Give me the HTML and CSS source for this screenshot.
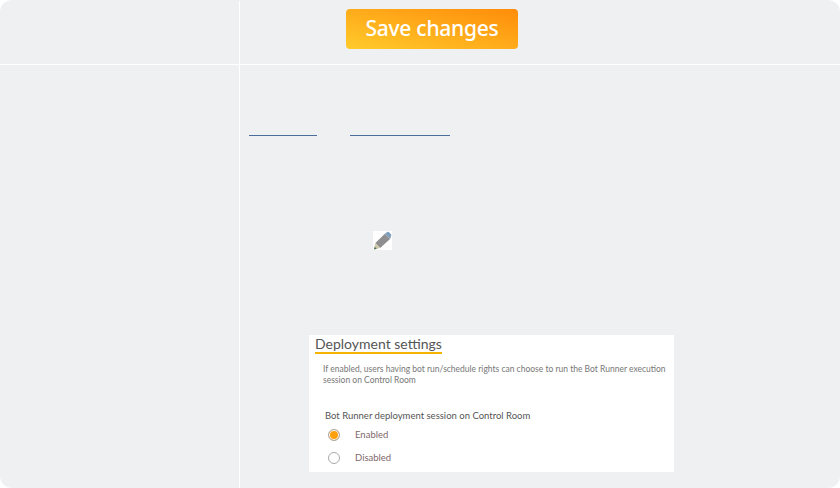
FILE: index.html
```html
<!DOCTYPE html>
<html lang="en">
<head>
    <meta charset="UTF-8">
    <title>Deployment settings</title>
    <link rel="stylesheet" href="styles.css">
</head>
<body>
    <div class="table">
        <div class="cell side top"></div>
        <div class="cell main top">
            <button class="save-btn" type="button">Save changes</button>
        </div>
        <div class="cell side"></div>
        <div class="cell main">
            <div class="links">
                <a class="link link-short" href="#"></a>
                <a class="link link-long" href="#"></a>
            </div>
            <svg class="pencil" width="19" height="19" viewBox="0 0 20 20">
                <rect width="20" height="20" fill="#fff"/>
                <path d="M2.5 12.5 L12.5 3 L18 8.5 L7.5 18 Z" fill="#8f8f92"/>
                <path d="M12.5 3 L15 1 Q16.2 0.6 17.2 1.5 L19 3.4 Q19.6 4.6 19 5.6 L18 8.5 Z" fill="#7f9fbd"/>
                <path d="M2.5 12.5 L7.5 18 L1 19.5 Z" fill="#cfc8a8"/>
                <path d="M1 19.5 L1.8 16.5 L4 18.6 Z" fill="#4a6a5a"/>
            </svg>
            <div class="shot">
                <h4 class="shot-title">Deployment settings</h4>
                <p class="shot-desc">If enabled, users having bot run/schedule rights can choose to run the Bot Runner execution session on Control Room</p>
                <div class="shot-label">Bot Runner deployment session on Control Room</div>
                <div class="radio-row">
                    <span class="radio checked"></span>
                    <span class="radio-text">Enabled</span>
                </div>
                <div class="radio-row">
                    <span class="radio"></span>
                    <span class="radio-text">Disabled</span>
                </div>
            </div>
        </div>
    </div>
</body>
</html>
```

FILE: styles.css
```css
body {
    margin: 0;
    padding: 0;
    background: #fff;
    font-family: 'Lato', sans-serif;
}

.table {
    display: grid;
    grid-template-columns: 240px 600px;
    grid-template-rows: 64px 423px;
    width: 840px;
    height: 488px;
    box-sizing: border-box;
    padding-top: 1px;
    background: #eef0f2;
    border-radius: 12px;
    overflow: hidden;
}

.cell {
    box-sizing: border-box;
}

.side {
    border-right: 1px solid #fff;
}

.top {
    border-bottom: 1px solid #fff;
}

.main.top {
    padding: 8px 0 0 106px;
}

.save-btn {
    display: block;
    width: 172px;
    height: 40px;
    padding: 0 0 2px;
    border: none;
    border-radius: 4px;
    background: linear-gradient(to top right, #ffcb2b, #ff8c0a);
    color: #fff;
    font-family: 'Noto Sans', sans-serif;
    font-size: 21px;
    font-weight: 500;
    letter-spacing: -0.25px;
    cursor: pointer;
}

.links {
    display: flex;
    gap: 33px;
    margin: 70px 0 0 9px;
}

.link {
    display: block;
    height: 1px;
    background: #4a6d9c;
}

.link-short {
    width: 68px;
}

.link-long {
    width: 100px;
}

.pencil {
    display: block;
    margin: 95px 0 0 133px;
    filter: blur(0.4px);
}

.shot {
    box-sizing: border-box;
    width: 365px;
    height: 137px;
    margin: 85px 0 0 69px;
    padding: 0 0 0 6px;
    background: #fff;
    color: #555;
}

.shot-title {
    width: fit-content;
    margin: 0;
    border-bottom: 2px solid #f5b400;
    font-size: 14px;
    font-weight: 400;
    line-height: 17px;
}

.shot-desc {
    margin: 10px 0 0 8px;
    width: 350px;
    font-size: 8.5px;
    line-height: 10.5px;
    color: #777;
}

.shot-label {
    margin: 24px 0 1px 10px;
    font-size: 9.5px;
    line-height: 13px;
}

.radio-row {
    display: flex;
    align-items: center;
    height: 23px;
    margin-left: 13px;
}

.radio {
    box-sizing: border-box;
    width: 12px;
    height: 12px;
    border: 1px solid #aaa;
    border-radius: 50%;
    background: #fff;
}

.radio.checked {
    background: #ff9f0a;
    box-shadow: inset 0 0 0 1px #fff;
}

.radio-text {
    margin-left: 15px;
    font-size: 9.5px;
    color: #80686a;
}
```
